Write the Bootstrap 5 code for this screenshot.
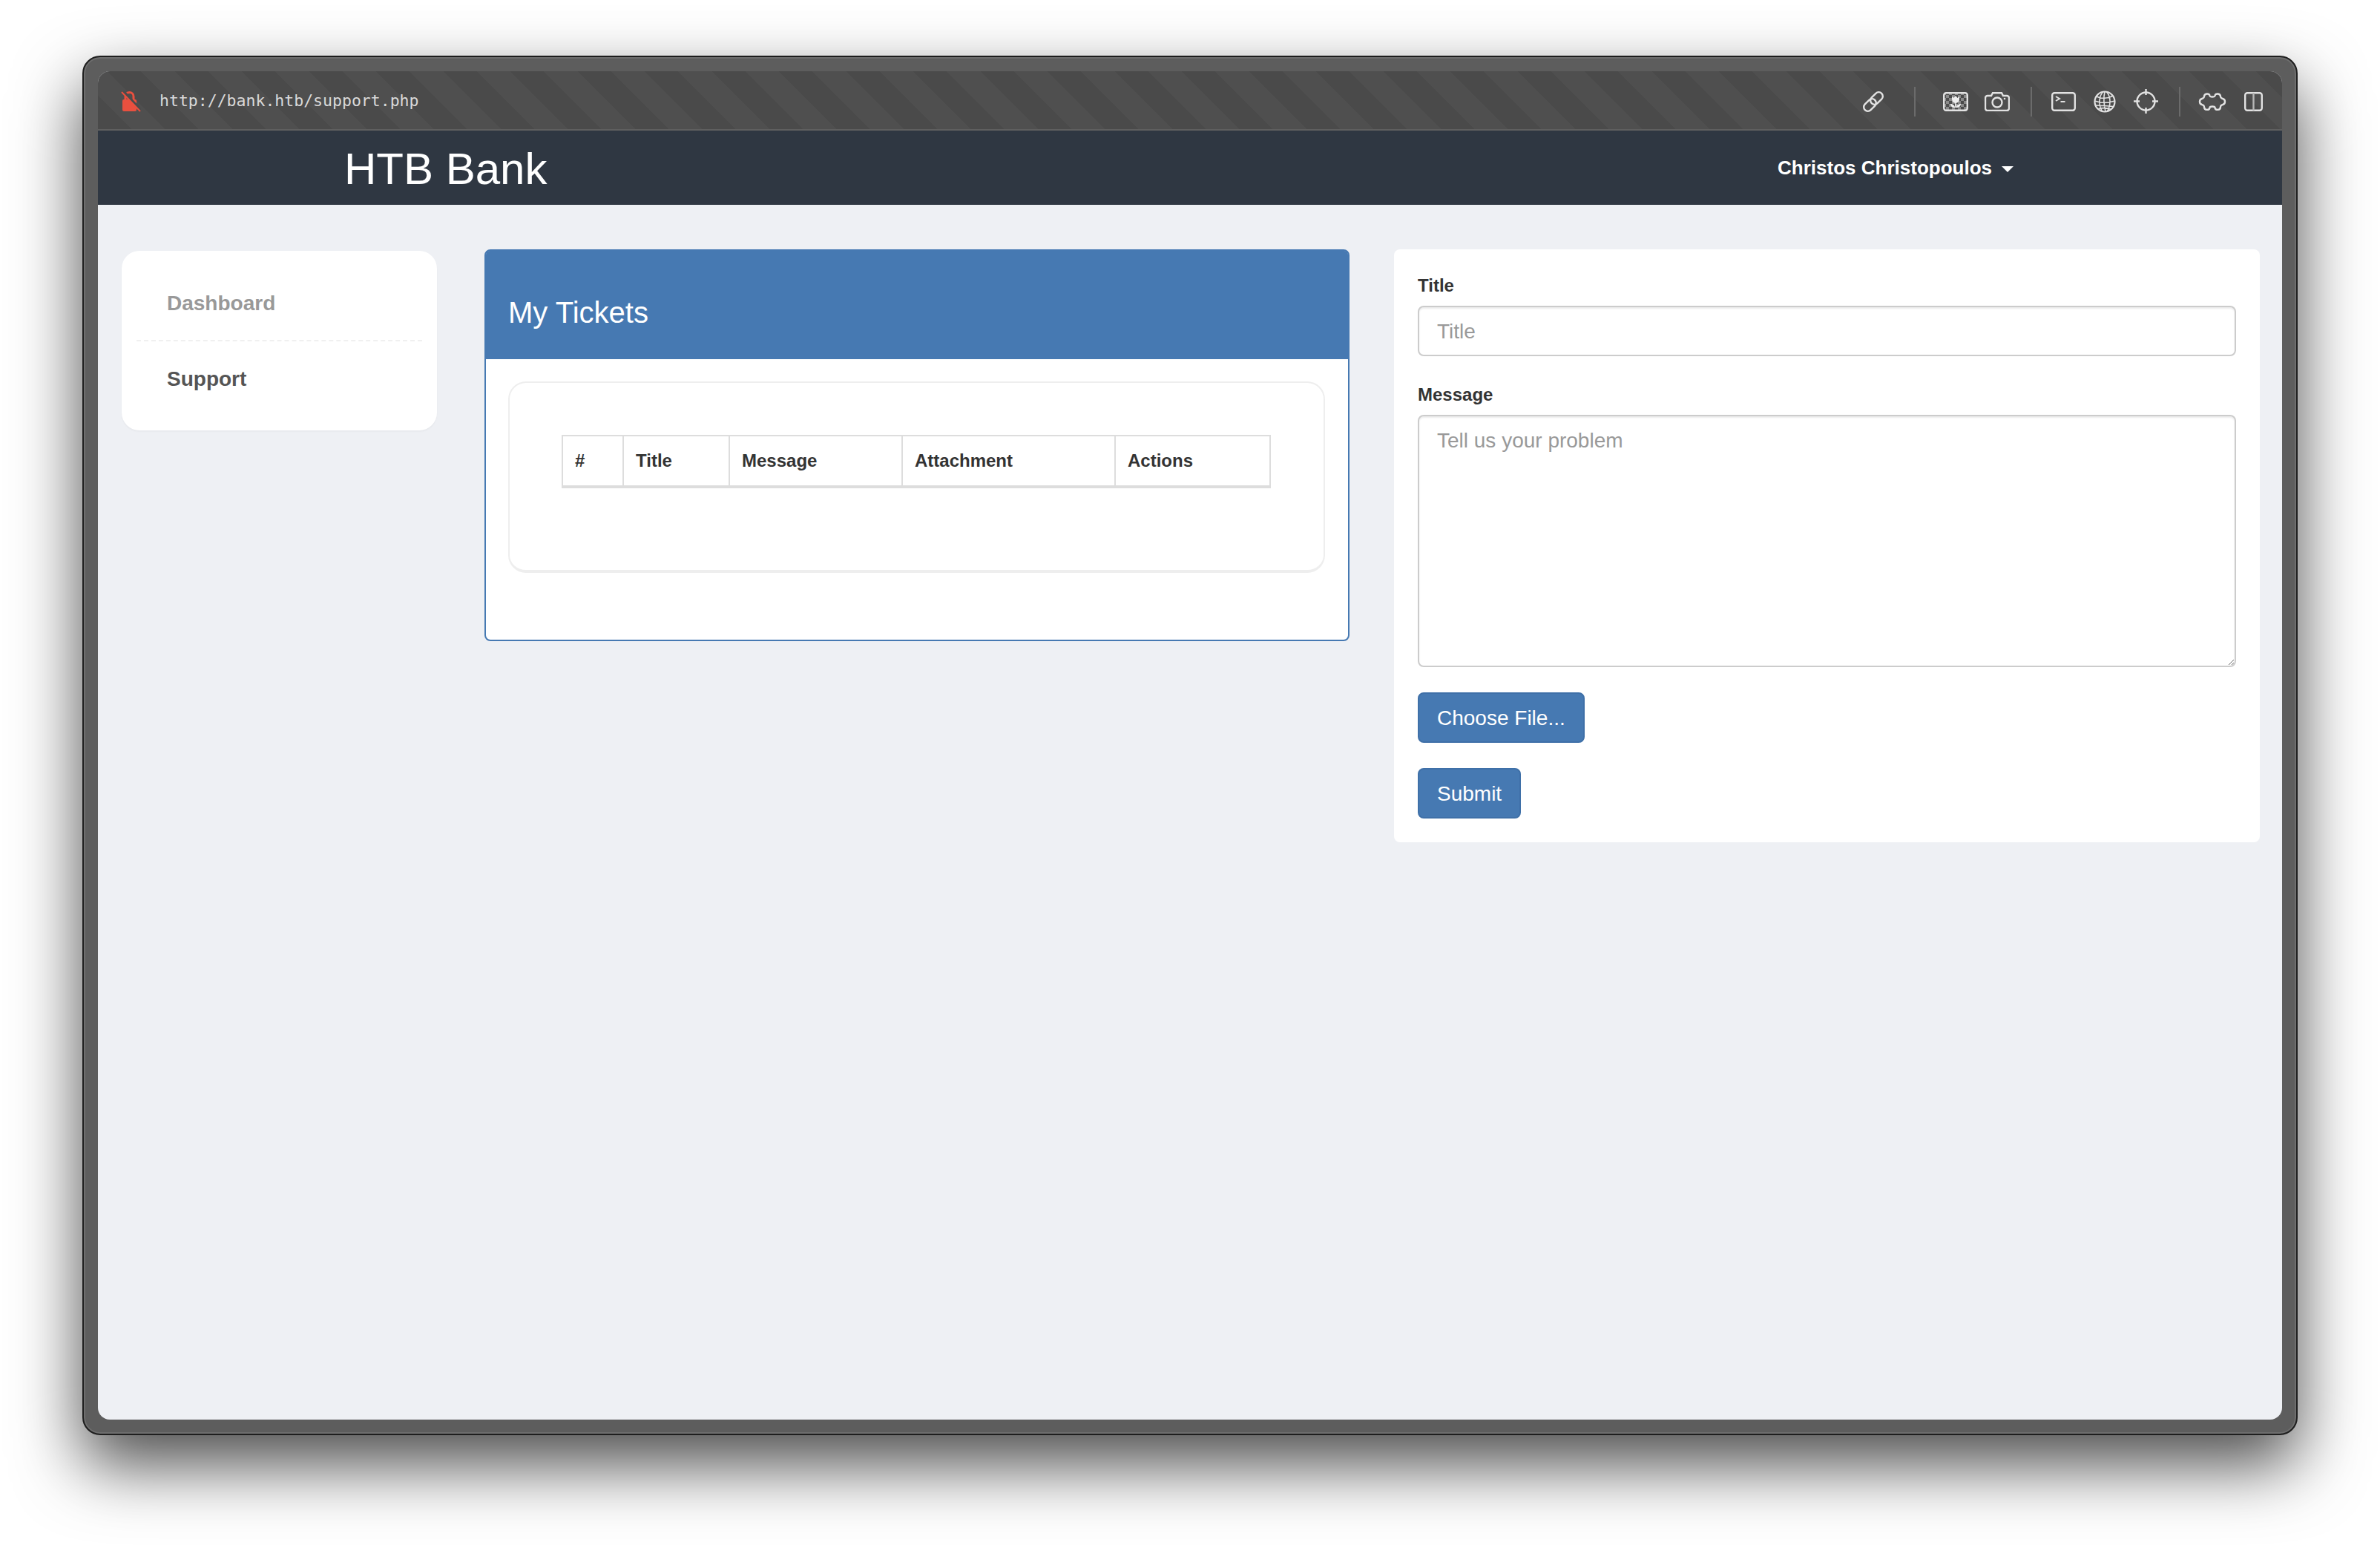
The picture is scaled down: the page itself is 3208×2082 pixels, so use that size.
<!DOCTYPE html>
<html lang="en">
<head>
    <meta charset="UTF-8">
    <meta name="viewport" content="width=device-width, initial-scale=1.0">
    <title>HTB Bank - Support</title>
    <link href="https://cdn.jsdelivr.net/npm/bootstrap@5.3.0/dist/css/bootstrap.min.css" rel="stylesheet">
    <style>
        html, body { height: 100%; }
        body {
            background: #fff;
            font-family: "Liberation Sans", Arial, sans-serif;
            font-size: 28px;
            line-height: 1.42857;
            color: #333;
            padding: 75px 111px 148px;
            overflow: hidden;
        }
        /* browser window frame */
        .win-frame {
            height: 100%;
            padding: 19px;
            background: #5d5d5d;
            border: 2px solid #1e1e1e;
            border-radius: 24px;
            box-shadow: inset 0 0 0 2px #6e6e6e, 0 40px 90px rgba(0, 0, 0, .7);
        }
        .win-screen {
            height: 100%;
            border-radius: 16px;
            overflow: hidden;
            background: #eef0f4;
        }
        .url-bar {
            height: 80px;
            padding: 3px 26px 0 31px;
            border-bottom: 2px solid #5f5f5f;
            background: repeating-linear-gradient(45deg, #4a4a4a 0, #4a4a4a 32px, #4f4f4f 32px, #4f4f4f 64px);
        }
        .url-text {
            margin-left: 25px;
            font-family: "DejaVu Sans Mono", "Liberation Mono", monospace;
            font-size: 21.5px;
            color: #d9d9d9;
        }
        .tool-icon { display: block; fill: none; stroke: #e2e2e2; stroke-width: 2.4; }
        .tool-sep { width: 2px; height: 40px; background: #6b6b6b; }
        .t-sep1 { margin-left: 40px; }
        .t-img { margin-left: 37px; }
        .t-cam { margin-left: 22px; }
        .t-sep2 { margin-left: 28px; }
        .t-term { margin-left: 26px; }
        .t-globe { margin-left: 24px; }
        .t-cross { margin-left: 24px; }
        .t-sep3 { margin-left: 28px; }
        .t-puzzle { margin-left: 24px; }
        .t-panel { margin-left: 24px; }

        /* site navbar */
        .site-nav {
            height: 100px;
            padding: 0 362px 0 332px;
            background: #2f3742;
        }
        .site-nav .navbar-brand {
            margin: 0;
            padding: 3px 0 0;
            font-size: 60px;
            line-height: 1;
            color: #fff;
        }
        .site-nav .dropdown-toggle {
            padding: 2px 0 0;
            font-size: 26px;
            font-weight: 700;
            color: #fff;
        }
        .site-nav .dropdown-toggle::after {
            margin-left: 13px;
            vertical-align: 3px;
            border-top-width: 8px;
            border-left-width: 8px;
            border-right-width: 8px;
        }

        .page-body { padding: 60px 30px 0 32px; }

        /* sidebar */
        .side-menu {
            width: 425px;
            margin: 2px 64px 0 0;
            padding: 20px;
            background: #fff;
            border-radius: 24px;
            box-shadow: 0 2px 2px rgba(0, 0, 0, .03);
        }
        .side-menu .list-group-item {
            padding: 31px 41px 29px;
            border: 0;
            background: none;
            font-size: 28px;
            font-weight: 700;
            line-height: 40px;
            color: #555;
        }
        .side-menu .list-group-item:first-child {
            height: 102px;
            border-bottom: 2px dashed #f0f0f0;
            color: #999;
        }

        /* tickets panel */
        .tickets-panel {
            width: 1166px;
            margin-right: 60px;
            border: 2px solid #4679b2;
            border-radius: 8px;
        }
        .tickets-panel .card-header {
            padding: 61px 30px 41px;
            background: #4679b2;
            border: 0;
            border-radius: 5px 5px 0 0;
        }
        .tickets-panel h3 {
            margin: 0;
            font-size: 40px;
            line-height: 44px;
            font-weight: 400;
            color: #fff;
        }
        .tickets-panel .card-body { padding: 30px 31px 90px 30px; }
        .tickets-well {
            height: 258px;
            padding: 70px 70px 0;
            border: 2px solid #eee;
            border-bottom-width: 4px;
            border-radius: 24px;
        }
        .tickets-table { table-layout: fixed; margin: 0; width: 956px; }
        .tickets-table th {
            padding: 16px;
            font-size: 24px;
            line-height: 34px;
            color: #333;
            border: 2px solid #ddd;
            border-bottom-width: 4px;
        }
        .tickets-table th:nth-child(1) { width: 82px; }
        .tickets-table th:nth-child(2) { width: 143px; }
        .tickets-table th:nth-child(3) { width: 233px; }
        .tickets-table th:nth-child(4) { width: 287px; }

        /* new ticket form */
        .ticket-form {
            width: 1167px;
            padding: 32px;
            background: #fff;
            border: 0;
            border-radius: 8px;
        }
        .ticket-form .form-label {
            margin-bottom: 10px;
            font-size: 24px;
            font-weight: 700;
            line-height: 34px;
            color: #333;
        }
        .ticket-form .form-control {
            height: 68px;
            padding: 13px 24px 11px;
            font-size: 28px;
            line-height: 40px;
            color: #555;
            border: 2px solid #ccc;
            border-radius: 8px;
            box-shadow: inset 0 2px 2px rgba(0, 0, 0, .075);
        }
        .ticket-form textarea.form-control { height: 340px; }
        .ticket-form .form-control::placeholder { color: #999; }
        .title-group { margin-bottom: 35px; }
        .message-group { margin-bottom: 34px; }
        .file-group { margin-bottom: 34px; }
        .btn-ticket {
            padding: 13px 24px 11px;
            font-size: 28px;
            line-height: 40px;
            color: #fff;
            background: #4679b2;
            border: 2px solid #3f70a8;
            border-radius: 8px;
        }
    </style>
</head>
<body>
    <div class="win-frame">
        <div class="win-screen d-flex flex-column">
            <div class="url-bar d-flex align-items-center">
                <svg width="27" height="28" viewBox="0 0 27 28">
                    <rect x="2" y="11" width="19" height="16" rx="2" fill="#e9503f"/>
                    <path d="M6 12V7a5.5 5.5 0 0 1 11 0v5" fill="none" stroke="#e9503f" stroke-width="3"/>
                    <path d="M2 -1L27 26" stroke="#4b4b4b" stroke-width="4"/>
                    <path d="M1 1L26 27" stroke="#e9503f" stroke-width="2"/>
                </svg>
                <span class="url-text">http://bank.htb/support.php</span>

                <svg class="tool-icon ms-auto" width="30" height="30" viewBox="0 0 30 30">
                    <rect x="-9.5" y="-5.5" width="19" height="11" rx="5.5" transform="translate(10.5 19.5) rotate(-45)"/>
                    <rect x="-9.5" y="-5.5" width="19" height="11" rx="5.5" transform="translate(19.5 10.5) rotate(-45)"/>
                </svg>
                <div class="tool-sep t-sep1"></div>
                <svg class="tool-icon t-img" width="34" height="26" viewBox="0 0 34 26">
                    <defs>
                        <pattern id="checker" width="8" height="8" patternUnits="userSpaceOnUse">
                            <rect width="4" height="4" fill="#8a8a8a" stroke="none"/>
                            <rect x="4" y="4" width="4" height="4" fill="#8a8a8a" stroke="none"/>
                        </pattern>
                    </defs>
                    <rect x="1.2" y="1.2" width="31.6" height="23.6" rx="3" fill="url(#checker)"/>
                    <path d="M12 6l2.5 2L17 5l2.5 3L22 6v4a5 5 0 0 1-10 0z" fill="#eee" stroke="none"/>
                    <path d="M16.3 21c-4 0-6-2-6.5-5 3.500 0 6 2 6.500 5zM17.700 21c4 0 6-2 6.500-5-3.500 0-6 2-6.500 5z" fill="#eee" stroke="none"/>
                    <path d="M17 14v7" stroke="#eee" stroke-width="1.6"/>
                </svg>
                <svg class="tool-icon t-cam" width="34" height="26" viewBox="0 0 34 26">
                    <path d="M4 5h5l2-3.800h12l2 3.800h5a3 3 0 0 1 3 3v14a3 3 0 0 1-3 3H4a3 3 0 0 1-3-3V8a3 3 0 0 1 3-3z"/>
                    <circle cx="17" cy="14" r="6.500"/>
                    <circle cx="27" cy="9" r="1.300" fill="#e2e2e2" stroke="none"/>
                </svg>
                <div class="tool-sep t-sep2"></div>
                <svg class="tool-icon t-term" width="33" height="26" viewBox="0 0 33 26">
                    <rect x="1.200" y="1.200" width="30.600" height="23.600" rx="3"/>
                    <path d="M6 6l5 3-5 3M12.500 13h6" stroke-width="2"/>
                </svg>
                <svg class="tool-icon t-globe" width="30" height="30" viewBox="0 0 30 30">
                    <circle cx="15" cy="15" r="13.500" stroke-width="2.200"/>
                    <path d="M13 1.500C7 7 6 20 12 28.500M17 1.500C24 8 23 21 18 28.500M15 1.500C13 10 14 20 16 28.500M3.500 8c7 3 16 3 23-1M1.500 14c8 3 18 3 27 0M2.500 20c8 0 16 1 25 1.500M6 25c5-2 12-1.500 18 .5" stroke-width="1.600"/>
                </svg>
                <svg class="tool-icon t-cross" width="33" height="33" viewBox="0 0 33 33">
                    <circle cx="16.500" cy="16.500" r="12"/>
                    <path d="M16.500 0v8M16.500 25v8M0 16.500h8M25 16.500h8"/>
                </svg>
                <div class="tool-sep t-sep3"></div>
                <svg class="tool-icon t-puzzle" width="38" height="26" viewBox="0 0 38 26">
                    <path d="M8 6C8 2 15 1 15.500 5C16 7 22 7 22.500 5C23 1 30 2 30 6C30 8 31 8 33 9C37 10 37 16 33 17C31 18 30 18 30 20C30 25 23 25 22.500 21C22 19 16 19 15.500 21C15 25 8 25 8 20C8 18 7 18 5 17C1 16 1 10 5 9C7 8 8 8 8 6Z"/>
                </svg>
                <svg class="tool-icon t-panel" width="25" height="26" viewBox="0 0 25 26">
                    <rect x="1.200" y="1.200" width="22.600" height="23.600" rx="3"/>
                    <path d="M12.500 1v24" stroke="#b5b5b5" stroke-width="2.400"/>
                </svg>
            </div>

            <nav class="navbar site-nav justify-content-between flex-nowrap">
                <a class="navbar-brand" href="#">HTB Bank</a>
                <a class="nav-link dropdown-toggle" href="#">Christos Christopoulos</a>
            </nav>

            <div class="page-body d-flex align-items-start">
                <div class="list-group side-menu">
                    <a class="list-group-item" href="#">Dashboard</a>
                    <a class="list-group-item" href="#">Support</a>
                </div>

                <div class="card tickets-panel">
                    <div class="card-header"><h3>My Tickets</h3></div>
                    <div class="card-body">
                        <div class="tickets-well">
                            <table class="table table-bordered tickets-table">
                                <thead>
                                    <tr><th>#</th><th>Title</th><th>Message</th><th>Attachment</th><th>Actions</th></tr>
                                </thead>
                            </table>
                        </div>
                    </div>
                </div>

                <form class="card ticket-form">
                    <div class="title-group">
                        <label class="form-label d-block" for="title">Title</label>
                        <input class="form-control" id="title" type="text" placeholder="Title">
                    </div>
                    <div class="message-group">
                        <label class="form-label d-block" for="message">Message</label>
                        <textarea class="form-control" id="message" placeholder="Tell us your problem"></textarea>
                    </div>
                    <div class="file-group"><button type="button" class="btn btn-ticket">Choose File...</button></div>
                    <div><button type="submit" class="btn btn-ticket">Submit</button></div>
                </form>
            </div>
        </div>
    </div>
</body>
</html>
